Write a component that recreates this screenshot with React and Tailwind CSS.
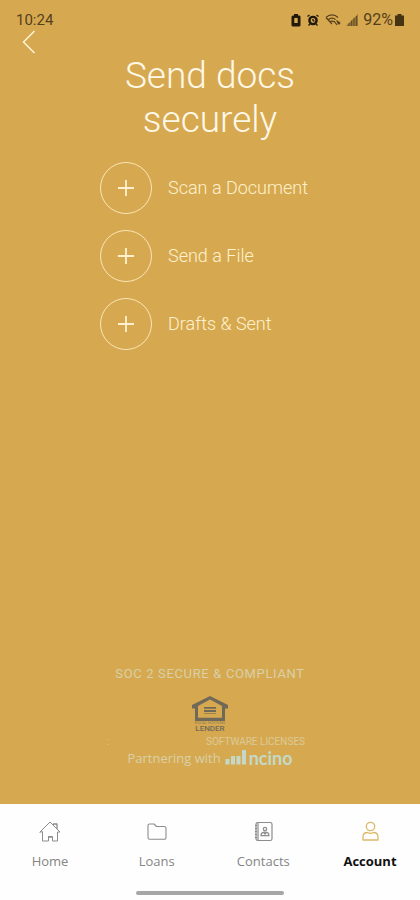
const actions = ["Scan a Document", "Send a File", "Drafts & Sent"];

function HomeIcon() {
  return (
    <svg viewBox="0 0 24 24" className="size-6" fill="none" stroke="currentColor" strokeWidth="1" strokeLinejoin="round" strokeLinecap="round">
      <path d="M2 12 12 2l10 10h-2.500V21h-5v-4.500h-4V21h-6v-9z" />
      <path d="M15.500 4.500V4H19V8.500" strokeWidth="1.300" />
      <path d="M10.500 17h3" strokeWidth="1.300" />
    </svg>
  );
}

function FolderIcon() {
  return (
    <svg viewBox="0 0 24 24" className="size-6" fill="none" stroke="currentColor" strokeWidth="1.100" strokeLinejoin="round">
      <path d="M3 17.500v-12a1.500 1.500 0 0 1 1.500-1.500H9l2.500 2.500H19A1.800 1.800 0 0 1 21 8.300v9.200a1.800 1.800 0 0 1-1.800 1.800H4.800A1.800 1.800 0 0 1 3 17.500z" />
    </svg>
  );
}

function ContactsIcon() {
  return (
    <svg viewBox="0 0 24 24" className="size-6" fill="none" stroke="currentColor" strokeWidth="1.200">
      <rect x="5" y="2.500" width="16" height="18" rx="1.800" />
      <path d="M7 2.500v18" />
      <path d="M4 5.500h2M4 8.500h2M4 11.500h2M4 14.500h2M4 17.500h2" />
      <circle cx="14" cy="9" r="1.700" />
      <path d="M10 15.700c0-2 1.400-3.600 4-3.600s4 1.600 4 3.600z" />
      <path d="m12.500 12.300 1.500 1.700 1.500-1.700" />
    </svg>
  );
}

function AccountIcon() {
  return (
    <svg viewBox="0 0 24 24" className="size-6" fill="none" stroke="currentColor" strokeWidth="1.300" strokeLinejoin="round">
      <circle cx="12.500" cy="6.500" r="4.200" />
      <path d="M5 20v-3c0-2.600 1.600-4.500 4.500-4.500 1 .6 2 .9 3 .9s2-.3 3-.9c2.900 0 4.500 1.900 4.500 4.500v3z" />
    </svg>
  );
}

const tabs = [
  { label: "Home", icon: HomeIcon },
  { label: "Loans", icon: FolderIcon },
  { label: "Contacts", icon: ContactsIcon },
  { label: "Account", icon: AccountIcon, active: true },
];

function StatusBar() {
  return (
    <div className="flex h-8 items-end justify-between px-4 text-[#54401c]">
      <span className="text-[15px] leading-6">10:24</span>
      <div className="flex h-6 items-center gap-[5px]">
        <svg viewBox="0 0 10 14" className="h-3.5 w-2.5 text-[#21180a]">
          <path fill="currentColor" fillRule="evenodd" d="M3 1h4v1.500h1.500Q9.500 2.500 9.500 4v8q0 1.500-1.500 1.500H2Q.5 13.500.5 12V4Q.5 2.500 2 2.500h1zM3.300 5v5h3.400V5z" />
        </svg>
        <svg viewBox="0 0 14 14" className="size-3.5 text-[#21180a]" fill="none" stroke="currentColor">
          <circle cx="7" cy="7.500" r="3.600" strokeWidth="2.400" />
          <path d="m1.500 3.500 2-1.500M12.500 3.500l-2-1.500M2.500 12.500l1.500-1.500M11.500 12.500 10 11M7 6v1.500l1.500.8" strokeWidth="1.300" />
        </svg>
        <svg viewBox="0 0 16 14" className="h-3.5 w-4" fill="none" stroke="currentColor" strokeWidth="1.200">
          <path d="M1 4.500c3.500-3.500 8.500-3.500 12 0M1 4.500l6 6.500M3.500 6.500c2.200-1.800 4.800-1.800 7 0M5 8.800c1.300-1 2.700-1 4 0" />
          <path d="m9 8 3 4M11.500 7.500l2 2" />
          <circle cx="13.800" cy="10" r="1.500" fill="currentColor" stroke="none" />
        </svg>
        <svg viewBox="0 0 12 14" className="h-3.5 w-3">
          <path d="M0 13 12 1v12z" fill="currentColor" opacity=".5" />
          <path d="M3 10v3M5.500 7.500V13M8 5v8M10.500 3v10" stroke="currentColor" strokeWidth="1" opacity=".7" />
        </svg>
        <div className="flex items-center gap-0.5">
          <span className="text-[16px] leading-6">92%</span>
          <svg viewBox="0 0 9 14" className="h-3.5 w-[9px] text-[#463312]">
            <path d="M2.500 1h4v1.500H9V13H0V2.500h2.500z" fill="currentColor" />
          </svg>
        </div>
      </div>
    </div>
  );
}

function LenderLogo() {
  return (
    <div className="flex flex-col items-center text-[#716958]">
      <svg viewBox="0 0 36 25" className="h-[25px] w-9" aria-label="Equal housing">
        <path fill="currentColor" fillRule="evenodd" d="M18 0 36 9v3.500h-3V25H3V12.500H0V9zM18 3.500 6 10v11.800h24V10z" />
        <path d="M12 11.800h12M12 15h12" stroke="currentColor" strokeWidth="1.800" />
        <path d="M12 17.500h12" stroke="currentColor" strokeWidth="1" opacity=".6" />
      </svg>
      <span className="text-[4px] leading-[4px] opacity-70">EQUAL HOUSING</span>
      <span className="text-[8px] font-medium leading-[8px]">LENDER</span>
    </div>
  );
}

export default function App() {
  return (
    <div className="flex min-h-screen flex-col bg-[#d6a950] font-['Roboto',sans-serif]">
      <StatusBar />
      <header className="h-[22px] px-4">
        <button type="button" aria-label="Back" className="block text-[#fff4d8]">
          <svg viewBox="0 0 24 24" className="size-6 overflow-visible" fill="none" stroke="currentColor" strokeWidth="1.500">
            <path d="m18.500-1-11 11 11 11" />
          </svg>
        </button>
      </header>

      <main className="flex grow flex-col items-center">
        <h1 className="w-52 text-center text-[37px] font-light leading-[44px] text-[#fff8e8]">
          Send docs securely
        </h1>

        <div className="mt-5 flex w-[220px] flex-col gap-4">
          {actions.map((label) => (
            <button key={label} type="button" className="flex items-center gap-4 whitespace-nowrap text-left text-[#fff1cf]">
              <span className="flex size-[52px] shrink-0 items-center justify-center rounded-full border border-[#fbe5b5]">
                <svg viewBox="0 0 18 18" className="size-[18px]" stroke="currentColor" strokeWidth="1.800">
                  <path d="M9 1v16M1 9h16" />
                </svg>
              </span>
              <span className="text-[18px] font-light leading-6">{label}</span>
            </button>
          ))}
        </div>

        <footer className="mt-auto flex flex-col items-center pb-9 text-[#d9d0a8]">
          <p className="text-[13px] leading-4 tracking-wider">SOC 2 SECURE &amp; COMPLIANT</p>
          <div className="mt-3.5">
            <LenderLogo />
          </div>
          <div className="mt-1 flex w-[206px] justify-between pr-2 text-[10px] leading-[10px] text-[#dcca98]">
            <span>:</span>
            <a href="#licenses">SOFTWARE LICENSES</a>
          </div>
          <div className="mt-px flex h-5 items-center gap-1">
            <span className="font-['Open_Sans',sans-serif] text-[13px] leading-5">Partnering with</span>
            <span className="flex items-center gap-0.5 text-[#c4d8c8]">
              <svg viewBox="0 0 22 18" className="h-[18px] w-[22px]" stroke="currentColor" strokeWidth="4">
                <path d="M2.500 10v5.500M8 7v8.500M13.500 7v8.500M19 1v14.500" />
              </svg>
              <span className="font-['Lato',sans-serif] text-[18px] font-bold leading-5">ncino</span>
            </span>
          </div>
        </footer>
      </main>

      <nav className="bg-[#fefefe] px-2.5 pb-[5px] pt-4 font-['Open_Sans',sans-serif]">
        <div className="flex justify-between">
          {tabs.map(({ label, icon: Icon, active }) => (
            <a
              key={label}
              href={`#${label.toLowerCase()}`}
              aria-current={active ? "page" : undefined}
              className="flex w-20 flex-col items-center gap-[7px]"
            >
              <span className={active ? "text-[#dcb968]" : "text-[#8c8c8c]"}>
                <Icon />
              </span>
              <span className={active ? "text-[13px] font-bold leading-5 text-[#111111]" : "text-[13px] leading-5 text-[#858585]"}>
                {label}
              </span>
            </a>
          ))}
        </div>
        <div className="mx-auto mt-5 h-1 w-[37%] rounded-full bg-[#a6a6a6]" />
      </nav>
    </div>
  );
}
